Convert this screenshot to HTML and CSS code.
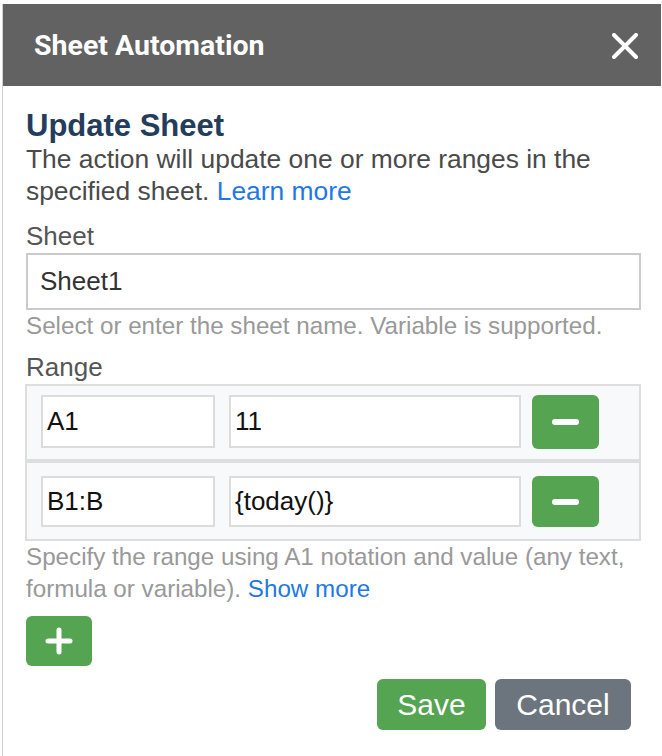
FILE: index.html
```html
<!DOCTYPE html>
<html>
<head>
<meta charset="utf-8">
<link rel="stylesheet" href="styles.css">
</head>
<body>
<div class="dialog">
  <div class="dialog-header">
    <h1 class="dialog-title">Sheet Automation</h1>
    <button class="close-btn" aria-label="Close">
      <svg width="26" height="26" viewBox="0 0 26 26"><path d="M2 2 L24 24 M24 2 L2 24" stroke="#fff" stroke-width="4" stroke-linecap="round" fill="none"/></svg>
    </button>
  </div>
  <div class="dialog-body">
    <h2 class="section-title">Update Sheet</h2>
    <p class="intro">The action will update one or more ranges in the specified sheet. <a class="link" href="#">Learn more</a></p>

    <label class="field-label">Sheet</label>
    <div class="text-input sheet-input">Sheet1</div>
    <p class="hint">Select or enter the sheet name. Variable is supported.</p>

    <label class="field-label range-label">Range</label>
    <div class="range-list">
      <div class="range-row">
        <div class="text-input cell-input">A1</div>
        <div class="text-input value-input">11</div>
        <button class="btn btn-green btn-remove" aria-label="Remove"><span class="minus-bar"></span></button>
      </div>
      <div class="range-row">
        <div class="text-input cell-input">B1:B</div>
        <div class="text-input value-input">{today()}</div>
        <button class="btn btn-green btn-remove" aria-label="Remove"><span class="minus-bar"></span></button>
      </div>
    </div>
    <p class="hint">Specify the range using A1 notation and value (any text, formula or variable). <a class="link" href="#">Show more</a></p>

    <button class="btn btn-green btn-add" aria-label="Add">
      <svg width="28" height="28" viewBox="0 0 28 28"><path d="M14 3 V25 M3 14 H25" stroke="#fff" stroke-width="5" stroke-linecap="round" fill="none"/></svg>
    </button>

    <div class="actions">
      <button class="btn btn-green btn-save">Save</button>
      <button class="btn btn-gray btn-cancel">Cancel</button>
    </div>
  </div>
</div>
</body>
</html>
```

FILE: styles.css
```css
html, body {
  margin: 0;
  padding: 0;
  background: #fff;
}

body {
  font-family: "Liberation Sans", Arial, sans-serif;
  color: #555;
}

.dialog {
  margin: 4px 0 0 2px;
  border-left: 1px solid #d2d2d2;
  width: 659px;
  min-height: 752px;
  box-sizing: border-box;
}

.dialog-header {
  background: #626262;
  height: 82px;
  display: flex;
  align-items: center;
  justify-content: space-between;
  padding: 0 23px 0 31px;
}

.dialog-title {
  margin: 0;
  font-family: Roboto, "Liberation Sans", sans-serif;
  font-weight: 700;
  font-size: 28.5px;
  color: #fff;
  letter-spacing: 0;
}

.close-btn {
  background: none;
  border: none;
  padding: 0;
  margin-top: 2px;
  width: 26px;
  height: 26px;
  display: flex;
}

.dialog-body {
  padding: 23px 20px 0 23px;
  display: flex;
  flex-direction: column;
  align-items: stretch;
}

.section-title {
  margin: 0;
  font-size: 31px;
  line-height: 34px;
  font-weight: 700;
  color: #253d5c;
}

.intro {
  margin: 0;
  font-size: 26.4px;
  line-height: 32px;
  color: #4a4a4a;
}

.link {
  color: #1f78e5;
  text-decoration: none;
}

.field-label {
  display: block;
  margin-top: 13px;
  font-size: 26px;
  line-height: 32px;
  color: #555;
}

.range-label {
  margin-top: 9px;
  margin-bottom: 1px;
}

.text-input {
  box-sizing: border-box;
  background: #fff;
  border: 2px solid #dcdcdc;
  font-size: 26px;
  color: #111;
  display: flex;
  align-items: center;
}

.sheet-input {
  margin-top: 1px;
  height: 57px;
  border-color: #cbcbcb;
  padding-left: 12px;
  color: #333;
}

.hint {
  margin: 0;
  font-size: 24.2px;
  line-height: 32px;
  color: #999;
}

.range-list {
  display: flex;
  flex-direction: column;
  margin-left: -1px;
}

.range-row {
  box-sizing: border-box;
  border: 2px solid #dedede;
  background: #f8f9fa;
  padding: 9px 0 9px 14px;
  display: flex;
  align-items: flex-start;
  height: 77px;
}

.range-row + .range-row {
  padding-top: 13px;
  height: 80px;
}

.cell-input {
  width: 174px;
  height: 53px;
  padding-left: 4px;
}

.value-input {
  margin-left: 14px;
  width: 292px;
  height: 53px;
  padding-left: 4px;
}

.range-row + .range-row .text-input {
  height: 51px;
}

.btn {
  border: none;
  border-radius: 6px;
  color: #fff;
  font-family: "Liberation Sans", Arial, sans-serif;
  cursor: pointer;
  padding: 0;
}

.btn-green {
  background: #55a451;
}

.btn-gray {
  background: #6c757d;
}

.btn-remove {
  margin-left: 11px;
  width: 67px;
  height: 54px;
  display: flex;
  align-items: center;
  justify-content: center;
}

.range-row + .range-row .btn-remove {
  height: 51px;
}

.minus-bar {
  width: 27px;
  height: 6px;
  border-radius: 3px;
  background: #fff;
}

.btn-add {
  margin-top: 11px;
  align-self: flex-start;
  width: 66px;
  height: 50px;
  display: flex;
  align-items: center;
  justify-content: center;
}

.actions {
  margin-top: 13px;
  margin-right: 10px;
  display: flex;
  justify-content: flex-end;
  gap: 9px;
}

.btn-save,
.btn-cancel {
  height: 51px;
  font-size: 30px;
}

.btn-save {
  width: 109px;
}

.btn-cancel {
  width: 136px;
}
```
